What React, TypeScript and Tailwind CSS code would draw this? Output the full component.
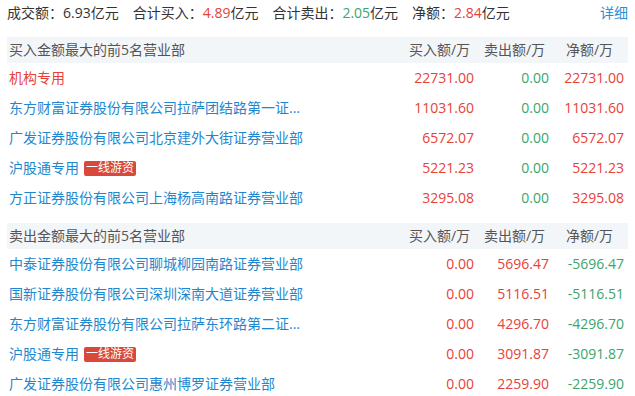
type Row = {
  name: string;
  tag?: string;
  buy: string;
  sell: string;
  net: string;
  nameColor?: string;
};

const buyRows: Row[] = [
  { name: '机构专用', buy: '22731.00', sell: '0.00', net: '22731.00', nameColor: 'text-[#e8413a]' },
  { name: '东方财富证券股份有限公司拉萨团结路第一证...', buy: '11031.60', sell: '0.00', net: '11031.60' },
  { name: '广发证券股份有限公司北京建外大街证券营业部', buy: '6572.07', sell: '0.00', net: '6572.07' },
  { name: '沪股通专用', tag: '一线游资', buy: '5221.23', sell: '0.00', net: '5221.23' },
  { name: '方正证券股份有限公司上海杨高南路证券营业部', buy: '3295.08', sell: '0.00', net: '3295.08' },
];

const sellRows: Row[] = [
  { name: '中泰证券股份有限公司聊城柳园南路证券营业部', buy: '0.00', sell: '5696.47', net: '-5696.47' },
  { name: '国新证券股份有限公司深圳深南大道证券营业部', buy: '0.00', sell: '5116.51', net: '-5116.51' },
  { name: '东方财富证券股份有限公司拉萨东环路第二证...', buy: '0.00', sell: '4296.70', net: '-4296.70' },
  { name: '沪股通专用', tag: '一线游资', buy: '0.00', sell: '3091.87', net: '-3091.87' },
  { name: '广发证券股份有限公司惠州博罗证券营业部', buy: '0.00', sell: '2259.90', net: '-2259.90' },
];

const red = 'text-[#e8413a]';
const green = 'text-[#3aa56e]';

function numColor(v: string) {
  if (v.startsWith('-')) return green;
  if (v === '0.00') return '';
  return red;
}

function Table({ title, rows, zeroColor }: { title: string; rows: Row[]; zeroColor: string }) {
  return (
    <div>
      <div className="flex h-[26px] items-center bg-[#f3f6f9] pr-[4px] pl-[2px] text-[#555]">
        <div className="flex-1">{title}</div>
        <div className="w-[75px] pl-[6px] text-center">买入额/万</div>
        <div className="w-[75px] pl-[6px] text-center">卖出额/万</div>
        <div className="w-[75px] pl-[6px] text-center">净额/万</div>
      </div>
      {rows.map((r) => (
        <div key={r.name + r.net} className="flex h-[30px] items-center pr-[4px] pl-[2px]">
          <div className={`flex flex-1 items-center gap-[5px] ${r.nameColor ?? 'text-[#1e88cf]'}`}>
            <span>{r.name}</span>
            {r.tag && (
              <span className="flex h-[15px] items-center rounded-[2px] bg-[#d9493a] px-[2px] text-[12px] text-white">
                {r.tag}
              </span>
            )}
          </div>
          <div className={`w-[75px] text-right ${numColor(r.buy) || zeroColor}`}>{r.buy}</div>
          <div className={`w-[75px] text-right ${numColor(r.sell) || zeroColor}`}>{r.sell}</div>
          <div className={`w-[75px] text-right ${numColor(r.net) || zeroColor}`}>{r.net}</div>
        </div>
      ))}
    </div>
  );
}

export default function App() {
  return (
    <div className="h-[396px] w-[635px] bg-white px-[7px] font-['Open_Sans','Noto_Sans_CJK_SC',sans-serif] text-[14px] leading-none text-[#333]">
      <div className="flex h-[26px] items-center">
        <div className="flex flex-1 gap-[14px]">
          <span>
            成交额：6.93亿元
          </span>
          <span>
            合计买入：<span className={red}>4.89</span>亿元
          </span>
          <span>
            合计卖出：<span className={green}>2.05</span>亿元
          </span>
          <span>
            净额：<span className={red}>2.84</span>亿元
          </span>
        </div>
        <span className="text-[#2a8fd8]">详细</span>
      </div>
      <div className="mt-[11px] flex flex-col gap-[10px]">
        <Table title="买入金额最大的前5名营业部" rows={buyRows} zeroColor={green} />
        <Table title="卖出金额最大的前5名营业部" rows={sellRows} zeroColor={red} />
      </div>
    </div>
  );
}
